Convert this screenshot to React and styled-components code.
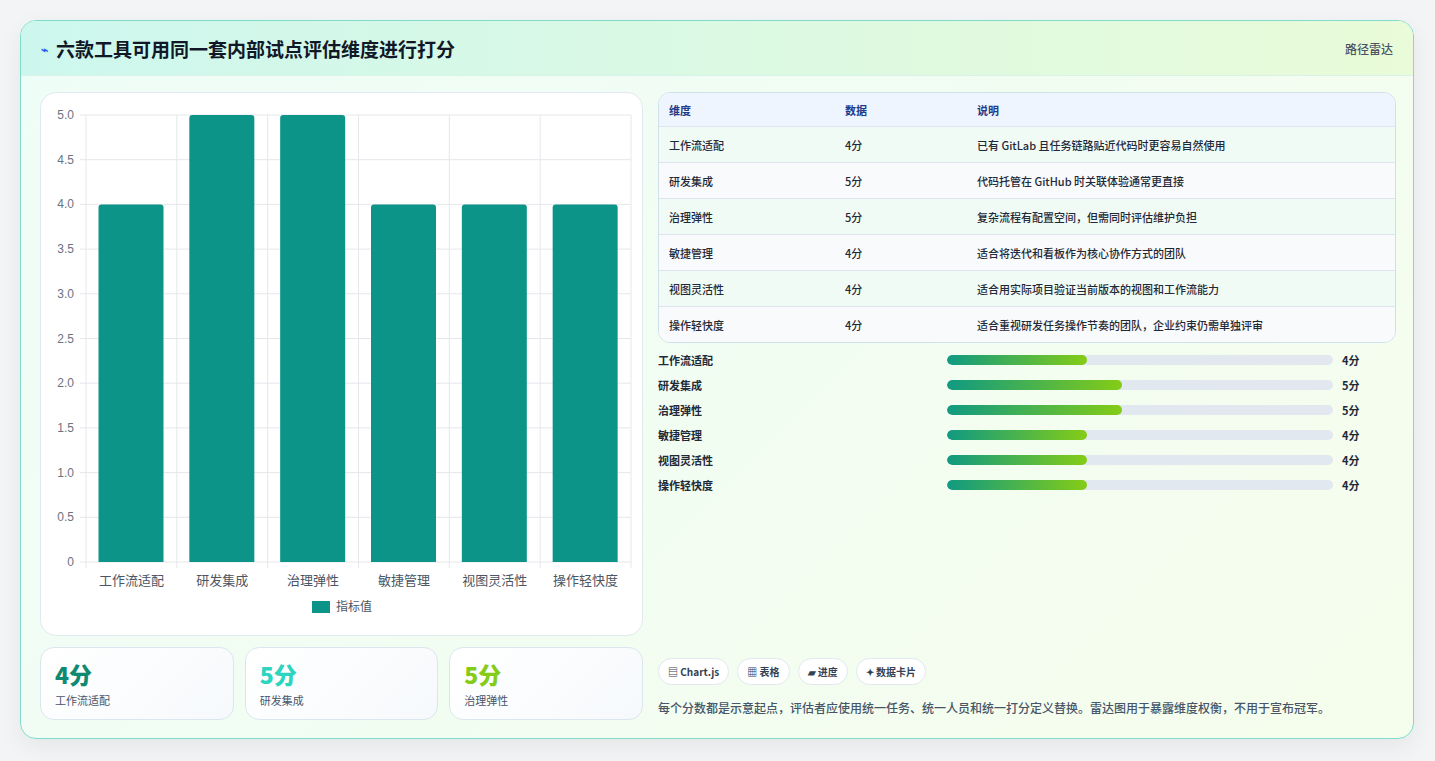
import React from "react";
import styled, { createGlobalStyle } from "styled-components";

const Global = createGlobalStyle`
  html,body{margin:0;padding:0;background:#f3f4f6;}
  body{font-family:"Noto Sans CJK SC","Noto Sans",sans-serif;}
`;
const Page = styled.div`padding:20px 21px 22px 20px;`;
const Card = styled.div`
  border:1px solid #7fdccb;border-radius:16px;overflow:hidden;
  background:linear-gradient(135deg,#effdf8 0%,#f5fdec 100%);
  box-shadow:0 8px 24px rgba(0,0,0,0.06);height:719px;box-sizing:border-box;
  display:flex;flex-direction:column;
`;
const Header = styled.div`
  height:55px;box-sizing:border-box;display:flex;align-items:center;justify-content:space-between;
  padding:0 20px;background:linear-gradient(90deg,#cdf7ee,#e9fbd8);border-bottom:1px solid #d8f3e8;
`;
const Title = styled.h1`margin:0;font-size:19px;font-weight:700;color:#111827;display:flex;align-items:center;gap:8px;`;
const Tag = styled.span`font-size:12px;color:#4b5563;font-weight:500;`;
const Body = styled.div`flex:1;display:grid;grid-template-columns:603px 738px;gap:15px;padding:16px 19px 18px 19px;`;
const Col = styled.div`display:flex;flex-direction:column;gap:11px;`;
const ChartCard = styled.div`background:#fff;border:1px solid #e2e8f0;border-radius:16px;height:544px;box-sizing:border-box;overflow:hidden;`;
const Stats = styled.div`display:grid;grid-template-columns:repeat(3,1fr);gap:11px;`;
const Stat = styled.div`background:linear-gradient(135deg,#fff,#f6f9fc);border:1px solid #dce6ee;border-radius:14px;height:73px;box-sizing:border-box;padding:12px 14px;`;
const StatVal = styled.div`font-size:23px;font-weight:800;color:${p=>p.c};line-height:28px;`;
const StatLbl = styled.div`font-size:11px;color:#475569;margin-top:4px;`;
const Table = styled.div`border:1px solid #cfe0ea;border-radius:12px;overflow:hidden;background:#fff;`;
const Row = styled.div`display:grid;grid-template-columns:176px 132px 1fr;height:${p=>p.h?"33px":"35px"};align-items:center;padding-left:10px;
  font-size:11px;font-weight:${p=>p.h?600:500};color:${p=>p.h?"#1e3a8a":"#1f2937"};
  background:${p=>p.h?"#eef5fe":p.alt?"#f8fafc":"#f1fbf5"};border-bottom:${p=>p.last?"none":"1px solid #dde6ee"};`;
const Bars = styled.div`display:flex;flex-direction:column;gap:9px;margin-top:9px;`;
const BarRow = styled.div`display:grid;grid-template-columns:280px 386px 1fr;column-gap:9px;align-items:center;height:16px;font-size:11px;font-weight:600;color:#1f2937;`;
const Track = styled.div`height:10px;border-radius:5px;background:#e2e8f0;overflow:hidden;`;
const Fill = styled.div`height:100%;border-radius:5px;background:linear-gradient(90deg,#109a82,#84cc16);`;
const Foot = styled.div`margin-top:auto;display:flex;flex-direction:column;gap:14px;padding-bottom:4px;`;
const Chips = styled.div`display:flex;gap:8px;`;
const Chip = styled.span`border:1px solid #e2e8f0;background:#fff;border-radius:14px;padding:5px 9px;font-size:10px;font-weight:700;color:#334155;`;
const Note = styled.div`font-size:12px;color:#475569;font-weight:500;`;

const data=[["工作流适配",4,"已有 GitLab 且任务链路贴近代码时更容易自然使用"],["研发集成",5,"代码托管在 GitHub 时关联体验通常更直接"],["治理弹性",5,"复杂流程有配置空间，但需同时评估维护负担"],["敏捷管理",4,"适合将迭代和看板作为核心协作方式的团队"],["视图灵活性",4,"适合用实际项目验证当前版本的视图和工作流能力"],["操作轻快度",4,"适合重视研发任务操作节奏的团队，企业约束仍需单独评审"]];

function Chart(){
  const x0=45,x1=590,y0=22,y1=469,h=y1-y0,cw=(x1-x0)/6;
  const ticks=[0,0.5,1,1.5,2,2.5,3,3.5,4,4.5,5];
  return <svg width="602" height="544" style={{display:"block"}} fontFamily="Liberation Sans, sans-serif">
    {ticks.map(t=>{const y=y1-t/5*h;return <g key={t}><line x1={x0-6} x2={x1} y1={y} y2={y} stroke="#e5e7eb"/><text x={x0-12} y={y+4} fontSize="12" fill="#6b7280" textAnchor="end">{t===0?"0":t.toFixed(1)}</text></g>})}
    {Array.from({length:7}).map((_,i)=><line key={i} x1={x0+i*cw} x2={x0+i*cw} y1={y0} y2={y1+6} stroke="#e5e7eb"/>)}
    {data.map((d,i)=>{const bh=d[1]/5*h;const bx=x0+i*cw+12.5;return <g key={i}>
      <path d={`M${bx},${y1} V${y1-bh+3} q0,-3 3,-3 h59 q3,0 3,3 V${y1} Z`} fill="#0d9488"/>
      <text x={x0+i*cw+cw/2} y={y1+23} fontSize="13" fill="#4b5563" textAnchor="middle" fontFamily="Noto Sans CJK SC">{d[0]}</text></g>})}
    <rect x="271" y="508" width="18" height="12" fill="#0d9488"/>
    <text x="295" y="518" fontSize="12" fill="#4b5563" fontFamily="Noto Sans CJK SC">指标值</text>
  </svg>;
}

export default function App(){
  return <Page><Global/><Card>
    <Header><Title><span style={{color:"#2563eb",fontSize:12}}>⌁</span>六款工具可用同一套内部试点评估维度进行打分</Title><Tag>路径雷达</Tag></Header>
    <Body>
      <Col>
        <ChartCard><Chart/></ChartCard>
        <Stats>
          <Stat><StatVal c="#0f8a72">4分</StatVal><StatLbl>工作流适配</StatLbl></Stat>
          <Stat><StatVal c="#2dd4bf">5分</StatVal><StatLbl>研发集成</StatLbl></Stat>
          <Stat><StatVal c="#84cc16">5分</StatVal><StatLbl>治理弹性</StatLbl></Stat>
        </Stats>
      </Col>
      <Col style={{gap:0}}>
        <Table>
          <Row h><span>维度</span><span>数据</span><span>说明</span></Row>
          {data.map((d,i)=><Row key={i} alt={i%2===1} last={i===5}><span>{d[0]}</span><span>{d[1]}分</span><span>{d[2]}</span></Row>)}
        </Table>
        <Bars>{data.map((d,i)=><BarRow key={i}><span>{d[0]}</span><Track><Fill style={{width:`${d[1]/11*100}%`}}/></Track><span>{d[1]}分</span></BarRow>)}</Bars>
        <Foot>
          <Chips><Chip>▤ Chart.js</Chip><Chip>▦ 表格</Chip><Chip>▰ 进度</Chip><Chip>✦ 数据卡片</Chip></Chips>
          <Note>每个分数都是示意起点，评估者应使用统一任务、统一人员和统一打分定义替换。雷达图用于暴露维度权衡，不用于宣布冠军。</Note>
        </Foot>
      </Col>
    </Body>
  </Card></Page>;
}
